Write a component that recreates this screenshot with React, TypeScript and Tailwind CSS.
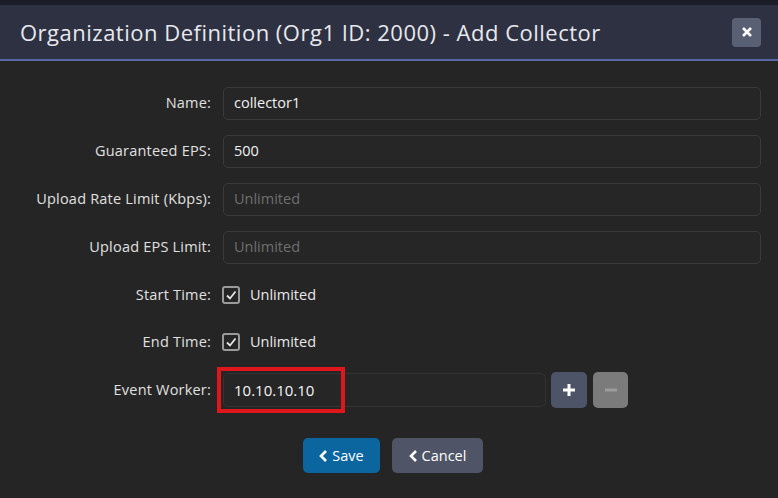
export default function App() {
  const rows: [string, string, boolean][] = [
    ["Name:", "collector1", true],
    ["Guaranteed EPS:", "500", true],
    ["Upload Rate Limit (Kbps):", "Unlimited", false],
    ["Upload EPS Limit:", "Unlimited", false],
  ];
  const Check = () => (
    <span className="w-[18px] h-[18px] border-2 border-[#9a9a9a] rounded-[3px] flex items-center justify-center">
      <svg width="12" height="12" viewBox="0 0 12 12"><path d="M2 6.5 L5 9.5 L10.5 2.5" stroke="#e5e5e5" strokeWidth="1.8" fill="none" /></svg>
    </span>
  );
  const label = "w-[211px] text-right text-[14.5px] tracking-[0.2px] font-medium text-[#e0e0e0] shrink-0";
  return (
    <div className="w-[778px] h-[498px] bg-[#252525] flex flex-col" style={{ fontFamily: '"Open Sans", "Liberation Sans", sans-serif' }}>
      <div className="h-[5px] bg-[#1a1d28]" />
      <div className="h-[56px] bg-[#2d3142] border-b-2 border-[#5866a3] flex items-center justify-between pl-[20px] pr-[17px]">
        <span className="text-[22px] text-[#e8e8ec] tracking-[0.5px]">Organization Definition (Org1 ID: 2000) - Add Collector</span>
        <span className="w-[29px] h-[29px] rounded bg-[#5a6073] flex items-center justify-center">
          <svg width="12" height="12" viewBox="0 0 12 12"><path d="M2 2 L10 10 M10 2 L2 10" stroke="#fff" strokeWidth="2.6" /></svg>
        </span>
      </div>
      <div className="flex flex-col pt-[18px]">
        {rows.map(([l, v, filled]) => (
          <div key={l} className="h-[48px] flex items-center">
            <span className={label}>{l}</span>
            <div className="ml-[12px] w-[538px] h-[33px] rounded-[5px] border border-[#3a3a3a] bg-[#262626] flex items-center px-[10px] text-[14.5px] font-medium">
              <span className={filled ? "text-[#f2f2f2]" : "text-[#6e6e6e]"}>{v}</span>
            </div>
          </div>
        ))}
        {["Start Time:", "End Time:"].map((l) => (
          <div key={l} className="h-[47px] flex items-center">
            <span className={label}>{l}</span>
            <div className="ml-[11px] flex items-center gap-[10px] text-[14.5px] font-medium text-[#e8e8e8]">
              <Check />
              <span>Unlimited</span>
            </div>
          </div>
        ))}
        <div className="h-[50px] flex items-center">
          <span className={label}>Event Worker:</span>
          <div className="ml-[12px] relative w-[323px] h-[34px] rounded-[5px] border border-[#333] bg-[#262626] flex items-center px-[10px] text-[15px] font-medium text-[#f5f5f5]">
            10.10.10.10
            <div className="absolute left-[-7px] top-[-7px] w-[128px] h-[46px] border-[4px] border-[#e0161d]" />
          </div>
          <span className="ml-[5px] w-[36px] h-[36px] rounded-[5px] bg-[#4d5467] flex items-center justify-center">
            <svg width="14" height="14" viewBox="0 0 14 14"><path d="M7 1 V13 M1 7 H13" stroke="#fff" strokeWidth="3" /></svg>
          </span>
          <span className="ml-[6px] w-[35px] h-[36px] rounded-[5px] bg-[#7b7b7b] flex items-center justify-center">
            <svg width="14" height="14" viewBox="0 0 14 14"><path d="M1 7 H13" stroke="#9c9c9c" strokeWidth="3" /></svg>
          </span>
        </div>
        <div className="flex justify-center gap-[12px] mt-[23px] pl-[8px]">
          <span className="w-[77px] h-[35px] rounded-[5px] bg-[#0b659f] text-white text-[14.5px] font-medium flex items-center justify-center gap-[4px]">
            <svg width="9" height="12" viewBox="0 0 9 12"><path d="M7 1 L2 6 L7 11" stroke="#fff" strokeWidth="2.6" fill="none" /></svg>Save
          </span>
          <span className="w-[91px] h-[35px] rounded-[5px] bg-[#4f5566] text-white text-[14.5px] font-medium flex items-center justify-center gap-[4px]">
            <svg width="9" height="12" viewBox="0 0 9 12"><path d="M7 1 L2 6 L7 11" stroke="#fff" strokeWidth="2.6" fill="none" /></svg>Cancel
          </span>
        </div>
      </div>
    </div>
  );
}
